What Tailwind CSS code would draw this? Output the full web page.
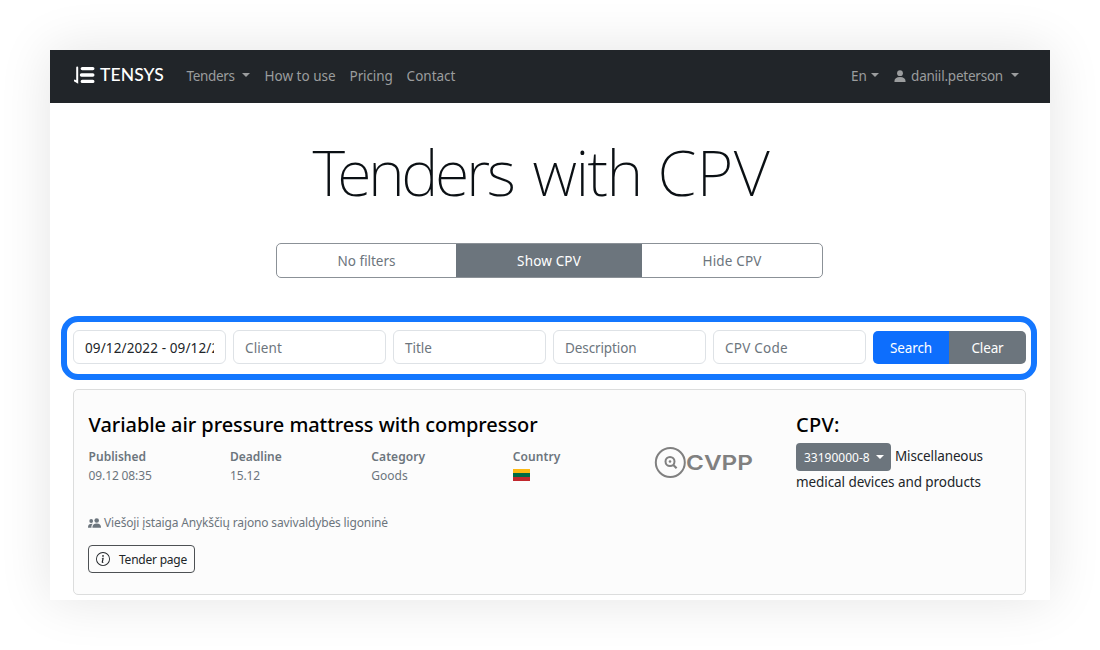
<!DOCTYPE html>
<html lang="en">
<head>
<meta charset="utf-8">
<title>Tenders with CPV</title>
<script src="https://cdn.jsdelivr.net/npm/@tailwindcss/browser@4"></script>
</head>
<body class="h-[650px] overflow-hidden bg-white p-[50px] font-['Noto_Sans',sans-serif] text-[13.5px] text-[#212529]">
<div class="h-[550px] w-[1000px] bg-white shadow-[0_0_50px_rgba(0,0,0,0.11)]">

  <nav class="flex h-[53px] items-center bg-[#212529] pr-[31px] pb-px pl-6 text-[13.5px] leading-5 whitespace-nowrap text-[#9b9d9e]">
    <a class="mb-[3px] flex w-[112.600px] items-center text-white">
      <svg class="h-[18px] w-[22px]" viewBox="0 0 22 18" fill="none" stroke="currentColor" stroke-linecap="round"><path d="M3.200 1.500V16L.8 14.600" stroke-width="2"/><path d="M8.300 2.600H18.800M7.500 9H18.800M8.300 15.400H18.800" stroke-width="3.400"/></svg>
      <span class="ml-1 font-[Lato] text-[17.5px] font-medium tracking-[0.1px]">TENSYS</span>
    </a>
    <a class="flex w-[78px] items-center"><span class="tracking-[-0.35px]">Tenders</span><i class="mb-[2px] ml-[7px] border-x-4 border-t-4 border-x-transparent"></i></a>
    <a class="w-[85px]">How to use</a>
    <a class="w-[57px] tracking-[-0.12px]">Pricing</a>
    <a>Contact</a>
    <a class="ml-auto flex w-[43px] items-center"><span>En</span><i class="mb-[2px] ml-1 border-x-4 border-t-4 border-x-transparent"></i></a>
    <a class="flex items-center">
      <svg class="mr-[5px] mb-px h-3 w-3" viewBox="0 0 12 12" fill="currentColor"><circle cx="6" cy="3.200" r="2.900"/><path d="M.4 11.400C.4 8.600 2.400 7 6 7s5.600 1.600 5.600 4.400q0 .6-.7.600H1.100q-.7 0-.7-.600Z"/></svg>
      <span class="tracking-[-0.22px]">daniil.peterson</span><i class="mb-[2px] ml-2 border-x-4 border-t-4 border-x-transparent"></i>
    </a>
  </nav>

  <h1 class="mt-6 flex h-[90px] items-center pl-[262.5px] text-[63px] font-extralight whitespace-nowrap text-[#0b1014]">
    <span class="w-[220px] tracking-[-3.4px]">Tenders</span>
    <span class="w-[125px] tracking-[-1.6px]">with</span>
    <span class="tracking-[0.4px]">CPV</span>
  </h1>

  <div class="mt-[26px] ml-[226px] flex h-[35px] w-[547px] items-stretch overflow-hidden rounded-[5px] border border-[#8b9197] leading-[33px] text-[#6c757d]">
    <button class="w-[179px] pt-px">No filters</button>
    <button class="w-[186px] bg-[#6c757d] pt-px tracking-[0.15px] text-white">Show CPV</button>
    <button class="flex-1 pt-px tracking-[0.15px]">Hide CPV</button>
  </div>

  <section class="mt-[38px] ml-[11px] flex h-[64px] w-[976px] items-center gap-[7px] rounded-[17px] border-[6px] border-[#1477ff] pr-[5px] pb-[2px] pl-[6px] leading-8 whitespace-nowrap text-[#6c757d]">
    <div class="h-[34px] w-[153px] rounded-md border border-[#dee2e6] px-[11px] pt-px text-[#212529]"><div class="overflow-hidden tracking-[0.12px]">09/12/2022 - 09/12/2022</div></div>
    <div class="h-[34px] w-[153px] rounded-md border border-[#dee2e6] px-[11px] pt-px tracking-[0.1px]">Client</div>
    <div class="h-[34px] w-[153px] rounded-md border border-[#dee2e6] px-[11px] pt-px">Title</div>
    <div class="h-[34px] w-[153px] rounded-md border border-[#dee2e6] px-[11px] pt-px tracking-[-0.1px]">Description</div>
    <div class="h-[34px] w-[153px] rounded-md border border-[#dee2e6] px-[11px] pt-px tracking-[0.25px]">CPV Code</div>
    <div class="flex h-[33px] w-[153px] overflow-hidden rounded-[5px] text-white">
      <button class="w-[76px] bg-[#0d6efd] pt-px tracking-[-0.12px]">Search</button>
      <button class="flex-1 bg-[#6c757d] pt-px tracking-[-0.15px]">Clear</button>
    </div>
  </section>

  <article class="mt-[9px] ml-[23px] flex h-[206px] w-[953px] rounded-[5px] border border-[#dcdddd] bg-[#fcfcfc] pl-[14.6px] whitespace-nowrap">
    <div class="w-[565.4px]">
      <h2 class="mt-[21px] text-[20px] leading-7 font-medium tracking-[-0.068px] text-black">Variable air pressure mattress with compressor</h2>
      <dl class="mt-[8px] grid grid-cols-4 text-[12px] leading-5 text-[#6c757d]">
        <div><dt class="leading-[19px] font-semibold">Published</dt><dd class="tracking-[-0.13px]">09.12 08:35</dd></div>
        <div><dt class="leading-[19px] font-semibold">Deadline</dt><dd class="tracking-[-0.13px]">15.12</dd></div>
        <div><dt class="leading-[19px] font-semibold tracking-[0.09px]">Category</dt><dd>Goods</dd></div>
        <div><dt class="leading-[19px] font-semibold tracking-[0.13px]">Country</dt><dd class="pt-[3px]"><div class="h-3 w-[17px] border-t-4 border-b-4 border-t-[#fdb913] border-b-[#c1272d] bg-[#006a44]"></div></dd></div>
      </dl>
      <p class="mt-[27px] flex items-center text-[12px] leading-5 text-[#6c757d]">
        <svg class="mr-[3px] -ml-[0.6px] h-[10px] w-[13px]" viewBox="0 0 13 10" fill="currentColor"><circle cx="8.700" cy="2.500" r="2.300"/><path d="M4.400 9.200c0-2.300 1.500-3.700 4.300-3.700S13 6.900 13 9.200q0 .6-.6.600H5q-.6 0-.6-.600Z"/><circle cx="3.200" cy="3" r="1.900"/><path d="M0 9.300C0 6.700 1.300 5.600 4.700 5.700 3.500 7 3.300 8.200 3.500 9.800H.6Q0 9.800 0 9.300Z"/></svg>
        <span class="tracking-[-0.144px]">Viešoji įstaiga Anykščių rajono savivaldybės ligoninė</span>
      </p>
      <button class="mt-3 -ml-[0.6px] flex h-[28px] w-[107px] items-center rounded-[4px] border border-[#4d5154] pl-[7px] text-[12px]">
        <svg class="mr-[9px] h-[14px] w-[14px]" viewBox="0 0 16 16" fill="currentColor"><path d="M8 15A7 7 0 1 1 8 1a7 7 0 0 1 0 14m0 1A8 8 0 1 0 8 0a8 8 0 0 0 0 16"/><path d="m8.930 6.588-2.290.287-.082.380.450.083c.294.070.352.176.288.469l-.738 3.468c-.194.897.105 1.319.808 1.319.545 0 1.178-.252 1.465-.598l.088-.416c-.2.176-.492.246-.686.246-.275 0-.375-.193-.304-.533zM9 4.500a1 1 0 1 1-2 0 1 1 0 0 1 2 0"/></svg>
        <span class="pt-px tracking-[-0.23px]">Tender page</span>
      </button>
    </div>
    <svg class="mt-[56px] h-[34px] w-[100px]" viewBox="0 0 100 34" fill="none" stroke="#808080">
      <circle cx="16.300" cy="16.500" r="14.500" stroke-width="2"/>
      <circle cx="16" cy="15.500" r="4.500" stroke-width="2"/><circle cx="16" cy="15.500" r="1.300" fill="#808080" stroke="none"/><path d="m19.300 19 3.300 3.300" stroke-width="2.200"/>
      <text x="32" y="24" textLength="67" lengthAdjust="spacingAndGlyphs" font-family="Inter" font-size="20.5" font-weight="600" fill="#808080" stroke="none">CVPP</text>
    </svg>
    <div class="ml-[42px]">
      <h3 class="mt-[21px] text-[20px] leading-7 font-medium tracking-[0.3px] text-black">CPV:</h3>
      <div class="mt-1 flex text-[13.5px] leading-6"><span class="mr-1 flex h-[28px] w-[95px] items-center rounded-[4px] bg-[#6c757d] pt-px pl-2 text-[12px] text-white">33190000-8<i class="mb-px ml-[6px] border-x-4 border-t-4 border-x-transparent"></i></span><span class="pt-px tracking-[-0.14px]">Miscellaneous</span></div>
      <div class="leading-[22px] tracking-[-0.075px]">medical devices and products</div>
    </div>
  </article>
</div>
</body>
</html>
